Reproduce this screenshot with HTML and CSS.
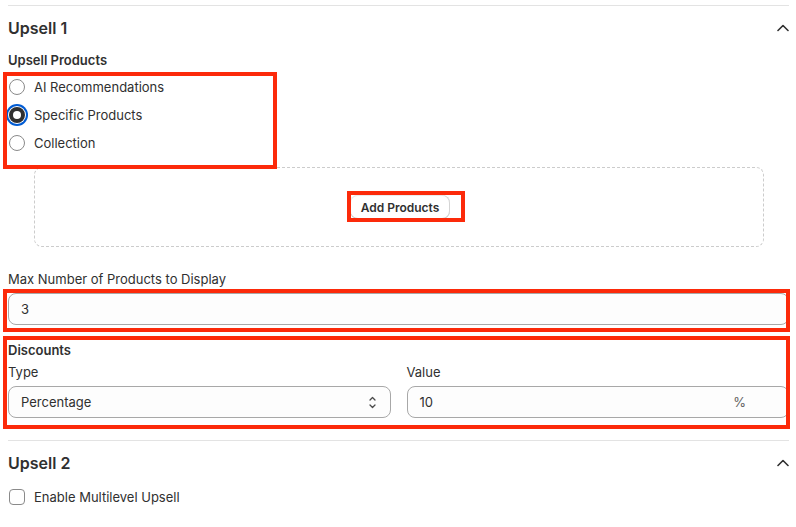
FILE: index.html
```html
<!DOCTYPE html>
<html lang="en">
<head>
<meta charset="utf-8">
<title>Upsell settings</title>
<link rel="stylesheet" href="styles.css">
</head>
<body>
<div class="page">
  <section class="panel panel-first">
    <div class="panel-head">
      <h2 class="panel-title">Upsell 1</h2>
      <svg class="chevron" width="12" height="8" viewBox="0 0 12 8"><polyline points="1,6.5 6,1.5 11,6.5" fill="none" stroke="#303030" stroke-width="1.6" stroke-linecap="round" stroke-linejoin="round"/></svg>
    </div>
    <div class="field-title">Upsell Products</div>
    <div class="radios">
      <label class="radio"><span class="radio-dot"></span>AI Recommendations</label>
      <label class="radio"><span class="radio-dot checked"></span>Specific Products</label>
      <label class="radio"><span class="radio-dot"></span>Collection</label>
    </div>
    <div class="dropzone"><button class="btn">Add Products</button></div>
    <div class="label">Max Number of Products to Display</div>
    <div class="input"><span>3</span></div>
    <div class="field-title discounts">Discounts</div>
    <div class="cols">
      <div class="col">
        <div class="label label-tight">Type</div>
        <div class="input select"><span>Percentage</span>
          <svg class="updown" width="7" height="13" viewBox="0 0 7 13"><polyline points="1,4 3.5,1.5 6,4" fill="none" stroke="#4a4a4a" stroke-width="1.3" stroke-linecap="round" stroke-linejoin="round"/><polyline points="1,9 3.5,11.5 6,9" fill="none" stroke="#4a4a4a" stroke-width="1.3" stroke-linecap="round" stroke-linejoin="round"/></svg>
        </div>
      </div>
      <div class="col">
        <div class="label label-tight">Value</div>
        <div class="input"><span>10</span><span class="suffix">%</span></div>
      </div>
    </div>
  </section>
  <section class="panel">
    <div class="panel-head">
      <h2 class="panel-title">Upsell 2</h2>
      <svg class="chevron" width="12" height="8" viewBox="0 0 12 8"><polyline points="1,6.5 6,1.5 11,6.5" fill="none" stroke="#303030" stroke-width="1.6" stroke-linecap="round" stroke-linejoin="round"/></svg>
    </div>
    <label class="check"><span class="check-box"></span>Enable Multilevel Upsell</label>
  </section>

  <div class="mark mark-radios"></div>
  <div class="mark mark-button"></div>
  <div class="mark mark-max"></div>
  <div class="mark mark-discounts"></div>
</div>
</body>
</html>
```

FILE: styles.css
```css
* { box-sizing: border-box; }
html, body { margin: 0; padding: 0; background: #ffffff; }
body {
  font-family: Inter, "Noto Sans", "Liberation Sans", sans-serif;
  font-size: 13px;
  line-height: 20px;
  color: #303030;
}
.page {
  position: relative;
  width: 796px;
  height: 527px;
  padding: 5px 7px 0 8px;
  overflow: hidden;
}
.panel {
  border-top: 1px solid #e3e3e3;
}
.panel-first { padding-bottom: 22px; }
.panel-head {
  margin-top: 10px;
  height: 24px;
  display: flex;
  align-items: center;
  justify-content: space-between;
}
.panel-title {
  margin: 0;
  font-size: 16px;
  line-height: 24px;
  font-weight: 600;
}
.chevron { display: block; margin-top: -1px; }
.field-title {
  margin-top: 10px;
  font-weight: 600;
  font-size: 13px;
}
.radios {
  margin-top: 7px;
  display: flex;
  flex-direction: column;
  gap: 8px;
}
.radio {
  display: flex;
  align-items: center;
  height: 20px;
}
.radio-dot {
  width: 16px;
  height: 16px;
  margin: 0 9px 0 1px;
  border-radius: 50%;
  border: 1px solid #8a8a8a;
  background: #fff;
  flex: none;
}
.radio-dot.checked {
  background: #303030;
  border: 4.5px solid #303030;
  box-shadow: 0 0 0 1px #fff, 0 0 0 3px #005bd3;
  position: relative;
}
.radio-dot.checked::after {
  content: "";
  position: absolute;
  inset: 0;
  border-radius: 50%;
  background: #fff;
}
.dropzone {
  margin: 14px 25px 0 26px;
  height: 80px;
  border: 1px dashed #cccccc;
  border-radius: 8px;
  display: flex;
  align-items: center;
  justify-content: center;
}
.btn {
  font-family: inherit;
  font-size: 12px;
  font-weight: 600;
  color: #303030;
  height: 24px;
  padding: 0 11px;
  background: #fff;
  border: 0;
  border-radius: 8px;
  box-shadow: inset -1px 0 0 #d4d4d4, inset 0 -1px 0 #c4c4c4, inset 1px 0 0 #ebebeb, inset 0 1px 0 #ebebeb;
  margin-left: 2px;
}
.label { margin-top: 22px; }
.label-tight { margin-top: 0; }
.input {
  margin-top: 4px;
  height: 32px;
  border: 1px solid #a8a8a8;
  border-radius: 8px;
  background: #fdfdfd;
  display: flex;
  align-items: center;
  padding: 0 12px;
}
.select { justify-content: space-between; padding-right: 14px; }
.updown { display: block; }
.suffix {
  margin-left: auto;
  margin-right: 30px;
  color: #616161;
}
.discounts { margin-top: 15px; }
.cols {
  margin-top: 2px;
  display: grid;
  grid-template-columns: 1fr 1fr;
  gap: 16px;
}
.check {
  margin-top: 12px;
  display: flex;
  align-items: center;
  height: 20px;
}
.check-box {
  width: 16px;
  height: 16px;
  margin: 0 9px 0 1px;
  border: 1px solid #8a8a8a;
  border-radius: 4px;
  background: #fff;
}
.mark {
  position: absolute;
  border: 4px solid #fc2a0a;
}
.mark-radios { left: 3px; top: 72px; width: 274px; height: 97px; }
.mark-button { left: 347px; top: 191px; width: 118px; height: 31px; }
.mark-max { left: 3px; top: 289px; width: 787px; height: 43px; }
.mark-discounts { left: 3px; top: 336px; width: 787px; height: 93px; }
```
